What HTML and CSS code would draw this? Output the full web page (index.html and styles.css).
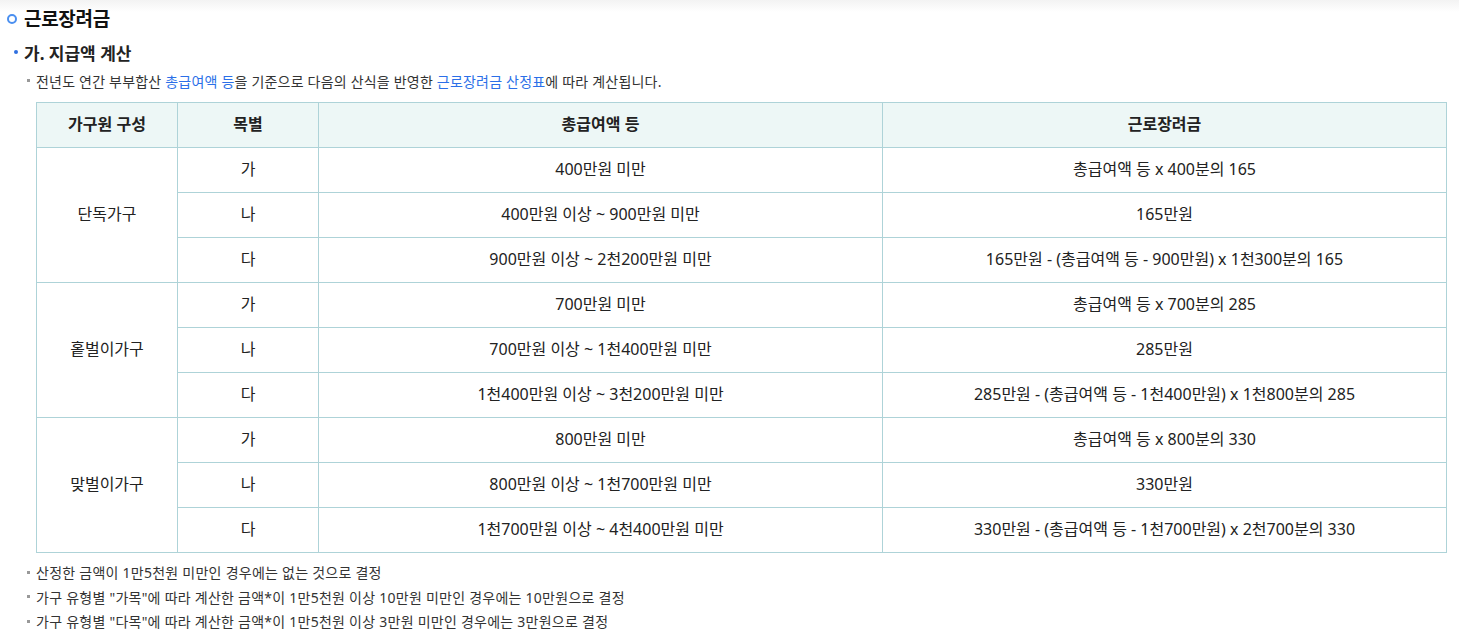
FILE: index.html
```html
<!DOCTYPE html>
<html lang="ko">
<head>
<meta charset="utf-8">
<link rel="stylesheet" href="styles.css">
</head>
<body>
<div class="page">
  <h2 class="title"><span class="ring"></span>근로장려금</h2>
  <h3 class="subtitle"><span class="dot"></span>가. 지급액 계산</h3>
  <p class="note">전년도 연간 부부합산 <span class="link">총급여액 등</span>을 기준으로 다음의 산식을 반영한 <span class="link">근로장려금 산정표</span>에 따라 계산됩니다.</p>
  <table class="calc">
    <colgroup><col class="c1"><col class="c2"><col class="c3"><col class="c4"></colgroup>
    <thead>
      <tr><th>가구원 구성</th><th>목별</th><th>총급여액 등</th><th>근로장려금</th></tr>
    </thead>
    <tbody>
      <tr><td rowspan="3">단독가구</td><td>가</td><td>400만원 미만</td><td>총급여액 등 x 400분의 165</td></tr>
      <tr><td>나</td><td>400만원 이상 ~ 900만원 미만</td><td>165만원</td></tr>
      <tr><td>다</td><td>900만원 이상 ~ 2천200만원 미만</td><td>165만원 - (총급여액 등 - 900만원) x 1천300분의 165</td></tr>
      <tr><td rowspan="3">홑벌이가구</td><td>가</td><td>700만원 미만</td><td>총급여액 등 x 700분의 285</td></tr>
      <tr><td>나</td><td>700만원 이상 ~ 1천400만원 미만</td><td>285만원</td></tr>
      <tr><td>다</td><td>1천400만원 이상 ~ 3천200만원 미만</td><td>285만원 - (총급여액 등 - 1천400만원) x 1천800분의 285</td></tr>
      <tr><td rowspan="3">맞벌이가구</td><td>가</td><td>800만원 미만</td><td>총급여액 등 x 800분의 330</td></tr>
      <tr><td>나</td><td>800만원 이상 ~ 1천700만원 미만</td><td>330만원</td></tr>
      <tr><td>다</td><td>1천700만원 이상 ~ 4천400만원 미만</td><td>330만원 - (총급여액 등 - 1천700만원) x 2천700분의 330</td></tr>
    </tbody>
  </table>
  <ul class="notes">
    <li>산정한 금액이 1만5천원 미만인 경우에는 없는 것으로 결정</li>
    <li>가구 유형별 "가목"에 따라 계산한 금액*이 1만5천원 이상 10만원 미만인 경우에는 10만원으로 결정</li>
    <li>가구 유형별 "다목"에 따라 계산한 금액*이 1만5천원 이상 3만원 미만인 경우에는 3만원으로 결정</li>
  </ul>
</div>
</body>
</html>
```
FILE: styles.css
```css
html, body {
  margin: 0;
  padding: 0;
}
body {
  background: #fff linear-gradient(#f3f3f3, #ffffff 12px) no-repeat;
  background-size: 100% 12px;
  font-family: "Noto Sans", "Noto Sans CJK KR", sans-serif;
  color: #222;
}
.page {
  padding: 0 13px 0 7px;
}
.title {
  margin: 0;
  height: 36px;
  display: flex;
  align-items: center;
  gap: 7px;
  font-size: 19px;
  letter-spacing: -0.3px;
  font-weight: 700;
  color: #111;
}
.ring {
  width: 6px;
  height: 6px;
  border: 2.5px solid #4a8ff0;
  border-radius: 50%;
  flex: none;
  margin-top: 1px;
}
.subtitle {
  margin: 0;
  height: 32px;
  display: flex;
  align-items: center;
  gap: 6px;
  padding-left: 7px;
  font-size: 17px;
  font-weight: 700;
  color: #222;
}
.dot {
  width: 4px;
  height: 4px;
  border-radius: 50%;
  background: #2f6fe0;
  flex: none;
}
.note {
  margin: 0;
  height: 25px;
  display: flex;
  align-items: center;
  padding-left: 20px;
  font-size: 14px;
  letter-spacing: 0.2px;
  color: #333;
  white-space: pre;
}
.note::before,
.notes li::before {
  content: "";
  width: 3px;
  height: 3px;
  background: #999;
  margin-right: 6px;
  flex: none;
}
.link {
  color: #2b6fe8;
}
.calc {
  margin: 9px 0 0 29px;
  width: 1411px;
  border-collapse: collapse;
  table-layout: fixed;
  font-size: 16px;
  color: #222;
}
.c1, .c2 { width: 10%; }
.c3, .c4 { width: 40%; }
.calc tr {
  height: 45px;
}
.calc th, .calc td {
  border: 1px solid #aed3d8;
  padding: 0 0 3px;
  line-height: 20px;
  text-align: center;
  vertical-align: middle;
}
.calc th {
  background: #edf7f6;
  font-weight: 700;
  color: #222;
}
.notes {
  list-style: none;
  margin: 7px 0 0;
  padding: 0 0 0 20px;
  font-size: 14px;
  letter-spacing: 0.25px;
  color: #333;
}
.notes li {
  display: flex;
  align-items: center;
  height: 24.5px;
  white-space: pre;
}
```
